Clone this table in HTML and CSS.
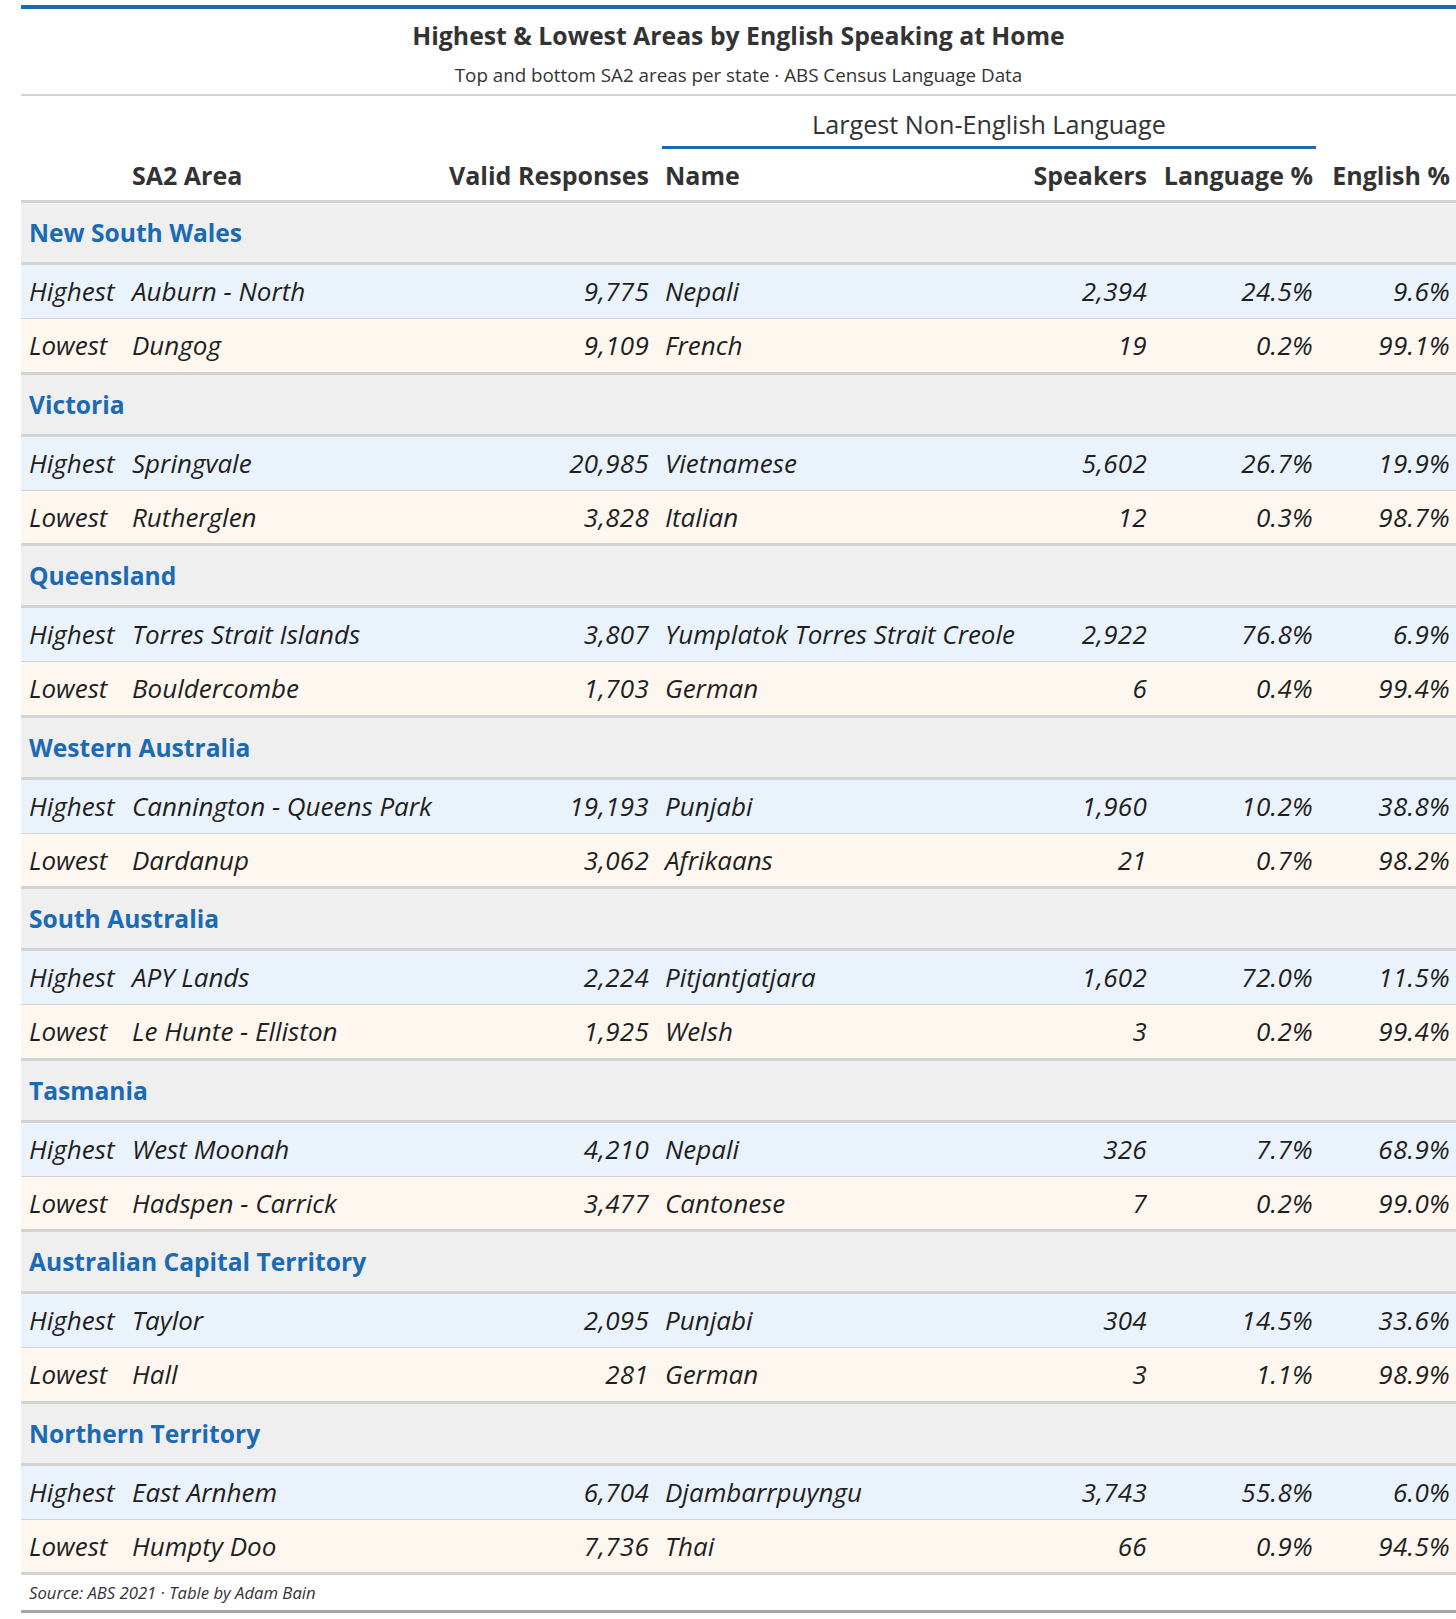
FILE: index.html
```html
<!DOCTYPE html>
<html lang="en">
<head>
<meta charset="utf-8">
<title>Highest &amp; Lowest Areas by English Speaking at Home</title>
<link rel="stylesheet" href="styles.css">
</head>
<body>
<div class="wrap">
<table class="gt">
  <colgroup>
    <col class="c-stub"><col class="c-area"><col class="c-valid"><col class="c-name"><col class="c-spk"><col class="c-lang"><col class="c-eng">
  </colgroup>
  <thead>
    <tr class="title-row">
      <th colspan="7" class="title-cell">
        <div class="title">Highest &amp; Lowest Areas by English Speaking at Home</div>
        <div class="subtitle">Top and bottom SA2 areas per state · ABS Census Language Data</div>
      </th>
    </tr>
    <tr class="spanner-row">
      <th colspan="3"></th>
      <th colspan="3" class="spanner"><div class="spanner-label">Largest Non-English Language</div></th>
      <th></th>
    </tr>
    <tr class="col-row">
      <th></th>
      <th class="l">SA2 Area</th>
      <th class="r">Valid Responses</th>
      <th class="l">Name</th>
      <th class="r">Speakers</th>
      <th class="r">Language %</th>
      <th class="r last">English %</th>
    </tr>
  </thead>
  <tbody>
    <tr class="group"><td colspan="7">New South Wales</td></tr>
    <tr class="hi"><td>Highest</td><td>Auburn - North</td><td class="r">9,775</td><td>Nepali</td><td class="r">2,394</td><td class="r">24.5%</td><td class="r last">9.6%</td></tr>
    <tr class="lo"><td>Lowest</td><td>Dungog</td><td class="r">9,109</td><td>French</td><td class="r">19</td><td class="r">0.2%</td><td class="r last">99.1%</td></tr>

    <tr class="group"><td colspan="7">Victoria</td></tr>
    <tr class="hi"><td>Highest</td><td>Springvale</td><td class="r">20,985</td><td>Vietnamese</td><td class="r">5,602</td><td class="r">26.7%</td><td class="r last">19.9%</td></tr>
    <tr class="lo"><td>Lowest</td><td>Rutherglen</td><td class="r">3,828</td><td>Italian</td><td class="r">12</td><td class="r">0.3%</td><td class="r last">98.7%</td></tr>

    <tr class="group"><td colspan="7">Queensland</td></tr>
    <tr class="hi"><td>Highest</td><td>Torres Strait Islands</td><td class="r">3,807</td><td>Yumplatok Torres Strait Creole</td><td class="r">2,922</td><td class="r">76.8%</td><td class="r last">6.9%</td></tr>
    <tr class="lo"><td>Lowest</td><td>Bouldercombe</td><td class="r">1,703</td><td>German</td><td class="r">6</td><td class="r">0.4%</td><td class="r last">99.4%</td></tr>

    <tr class="group"><td colspan="7">Western Australia</td></tr>
    <tr class="hi"><td>Highest</td><td>Cannington - Queens Park</td><td class="r">19,193</td><td>Punjabi</td><td class="r">1,960</td><td class="r">10.2%</td><td class="r last">38.8%</td></tr>
    <tr class="lo"><td>Lowest</td><td>Dardanup</td><td class="r">3,062</td><td>Afrikaans</td><td class="r">21</td><td class="r">0.7%</td><td class="r last">98.2%</td></tr>

    <tr class="group"><td colspan="7">South Australia</td></tr>
    <tr class="hi"><td>Highest</td><td>APY Lands</td><td class="r">2,224</td><td>Pitjantjatjara</td><td class="r">1,602</td><td class="r">72.0%</td><td class="r last">11.5%</td></tr>
    <tr class="lo"><td>Lowest</td><td>Le Hunte - Elliston</td><td class="r">1,925</td><td>Welsh</td><td class="r">3</td><td class="r">0.2%</td><td class="r last">99.4%</td></tr>

    <tr class="group"><td colspan="7">Tasmania</td></tr>
    <tr class="hi"><td>Highest</td><td>West Moonah</td><td class="r">4,210</td><td>Nepali</td><td class="r">326</td><td class="r">7.7%</td><td class="r last">68.9%</td></tr>
    <tr class="lo"><td>Lowest</td><td>Hadspen - Carrick</td><td class="r">3,477</td><td>Cantonese</td><td class="r">7</td><td class="r">0.2%</td><td class="r last">99.0%</td></tr>

    <tr class="group"><td colspan="7">Australian Capital Territory</td></tr>
    <tr class="hi"><td>Highest</td><td>Taylor</td><td class="r">2,095</td><td>Punjabi</td><td class="r">304</td><td class="r">14.5%</td><td class="r last">33.6%</td></tr>
    <tr class="lo"><td>Lowest</td><td>Hall</td><td class="r">281</td><td>German</td><td class="r">3</td><td class="r">1.1%</td><td class="r last">98.9%</td></tr>

    <tr class="group"><td colspan="7">Northern Territory</td></tr>
    <tr class="hi"><td>Highest</td><td>East Arnhem</td><td class="r">6,704</td><td>Djambarrpuyngu</td><td class="r">3,743</td><td class="r">55.8%</td><td class="r last">6.0%</td></tr>
    <tr class="lo"><td>Lowest</td><td>Humpty Doo</td><td class="r">7,736</td><td>Thai</td><td class="r">66</td><td class="r">0.9%</td><td class="r last">94.5%</td></tr>
  </tbody>
  <tfoot>
    <tr><td colspan="7" class="source">Source: ABS 2021 · Table by Adam Bain</td></tr>
  </tfoot>
</table>
</div>
</body>
</html>
```

FILE: styles.css
```css
html, body {
  margin: 0;
  padding: 0;
  background: #ffffff;
}

.wrap {
  padding: 5px 0 0 21px;
}

.gt {
  width: 1435px;
  table-layout: fixed;
  border-collapse: separate;
  border-spacing: 0;
  font-family: "Open Sans", "Noto Sans", sans-serif;
  color: #222222;
}

.c-stub { width: 103px; }
.c-area { width: 314px; }
.c-valid { width: 219px; }
.c-name { width: 364px; }
.c-spk { width: 134px; }
.c-lang { width: 166px; }
.c-eng { width: 135px; }

.gt th, .gt td {
  padding: 0 8px;
  white-space: nowrap;
  overflow: visible;
}

.l { text-align: left; }
.r { text-align: right; }
.gt .last { padding-right: 6px; }

/* Title */
.gt .title-cell {
  border-top: 4px solid #1b68b3;
  border-bottom: 2px solid #d3d3d3;
  text-align: center;
  padding: 12px 0 9px 0;
}

.title {
  font-size: 24.8px;
  line-height: 28px;
  font-weight: 700;
  color: #333333;
}

.subtitle {
  margin-top: 16px;
  font-size: 18.8px;
  line-height: 20px;
  font-weight: 400;
  color: #333333;
}

/* Spanner */
.gt .spanner-row th {
  padding: 14px 0 0 0;
  font-weight: 400;
}

.gt .spanner-row .spanner {
  padding: 14px 5px 0 5px;
}

.spanner-label {
  font-size: 25.2px;
  line-height: 28px;
  padding-bottom: 8px;
  border-bottom: 3px solid #1b68b3;
  text-align: center;
  color: #333333;
}

/* Column headings */
.gt .col-row th {
  font-size: 25px;
  line-height: 28px;
  font-weight: 700;
  color: #333333;
  padding-top: 12px;
  padding-bottom: 11px;
  border-bottom: 3px solid #d3d3d3;
}

.gt .col-row .last { padding-right: 6px; }

/* Body */
.gt tbody td {
  font-size: 26px;
  font-style: italic;
  color: #1f1f1f;
}

.gt tbody .r {
  letter-spacing: 0.3px;
}

.gt tbody .group td {
  font-size: 24.6px;
  font-style: normal;
  font-weight: 700;
  color: #1b6ab4;
  background: #efefef;
  line-height: 59px;
  border-bottom: 3px solid #d3d3d3;
}

.gt tbody .hi td {
  background: #eaf2fb;
  line-height: 53px;
  border-bottom: 1px solid #d3d3d3;
}

.gt tbody .lo td {
  background: #fef7f0;
  line-height: 52.5px;
  border-bottom: 3px solid #d3d3d3;
}

/* Footer */
.gt .source {
  font-size: 16.7px;
  font-style: italic;
  line-height: 35px;
  color: #333333;
  border-bottom: 3px solid #a6a6a6;
}
```
